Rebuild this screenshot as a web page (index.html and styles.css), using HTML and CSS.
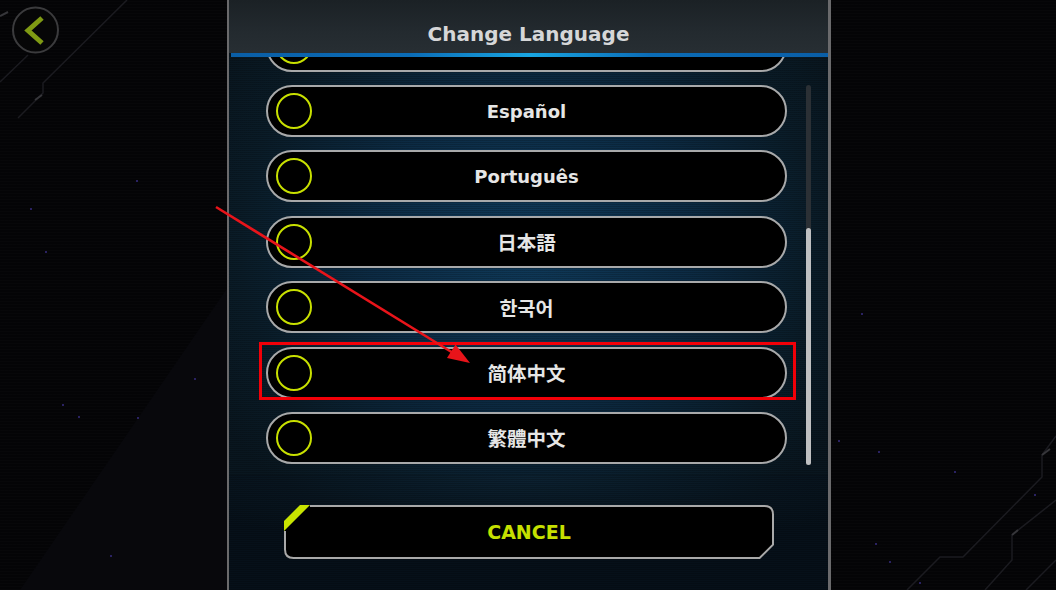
FILE: index.html
```html
<!DOCTYPE html>
<html lang="en">
<head>
<meta charset="utf-8">
<title>Change Language</title>
<link rel="stylesheet" href="styles.css">
</head>
<body>
<div class="screen">
  <svg class="circuit" width="1056" height="590" viewBox="0 0 1056 590" aria-hidden="true">
    <polygon points="250,255 250,590 20,590" fill="#08080c"/>
    <g fill="none" stroke="#1b1b20" stroke-width="1.5">
      <polyline points="0,82 28,55"/>
      <polyline points="127,0 43,83 43,93 18,118"/>
      <polyline points="1056,436 1042,455 1042,477 963,557 940,557 907,590"/>
      <polyline points="1056,500 1012,535 1012,560 985,590"/>
      <polyline points="1056,560 1026,590"/>
    </g>
    <g stroke="#36363a" stroke-width="2">
      <line x1="0" y1="16" x2="8" y2="12"/>
      <line x1="35" y1="100" x2="42" y2="95"/>
      <line x1="1042" y1="455" x2="1050" y2="449"/>
      <line x1="1012" y1="535" x2="1018" y2="530"/>
    </g>
    <g fill="#2a2262">
      <rect x="30" y="208" width="2" height="2"/>
      <rect x="45" y="251" width="2" height="2"/>
      <rect x="136" y="180" width="2" height="2"/>
      <rect x="78" y="416" width="2" height="2"/>
      <rect x="194" y="378" width="2" height="2"/>
      <rect x="110" y="555" width="2" height="2"/>
      <rect x="137" y="417" width="2" height="2"/>
      <rect x="62" y="404" width="2" height="2"/>
      <rect x="861" y="313" width="2" height="2"/>
      <rect x="838" y="440" width="2" height="2"/>
      <rect x="878" y="451" width="2" height="2"/>
      <rect x="954" y="471" width="2" height="2"/>
      <rect x="1034" y="494" width="2" height="2"/>
      <rect x="875" y="543" width="2" height="2"/>
      <rect x="889" y="561" width="2" height="2"/>
      <rect x="919" y="582" width="2" height="2"/>
    </g>
  </svg>

  <button class="back" type="button" aria-label="Back">
    <svg width="50" height="50" viewBox="0 0 50 50" aria-hidden="true">
      <circle cx="24.5" cy="24" r="22.5" fill="#060607" stroke="#3b3b3d" stroke-width="2"/>
      <polyline points="31,12 17,24.5 31,37" fill="none" stroke="#7f9a14" stroke-width="5" stroke-linejoin="miter"/>
    </svg>
  </button>

  <section class="panel">
    <header class="panel-head">
      <h1 class="title">Change Language</h1>
    </header>
    <div class="blue-bar"></div>

    <div class="list">
      <div class="rows">
        <div class="row"><span class="radio"></span></div>
        <div class="row"><span class="radio"></span><span class="label">Español</span></div>
        <div class="row"><span class="radio"></span><span class="label">Português</span></div>
        <div class="row"><span class="radio"></span><span class="label" lang="ja">日本語</span></div>
        <div class="row"><span class="radio"></span><span class="label" lang="ko">한국어</span></div>
        <div class="row"><span class="radio"></span><span class="label" lang="zh-Hans">简体中文</span></div>
        <div class="row"><span class="radio"></span><span class="label" lang="zh-Hant">繁體中文</span></div>
      </div>
      <div class="scroll-track"><div class="scroll-thumb"></div></div>
    </div>

    <footer class="panel-foot">
      <button class="cancel" type="button">
        <svg class="cancel-frame" width="490" height="54" viewBox="0 0 490 54" aria-hidden="true">
          <path d="M26 0 H481 Q490 0 490 9 V40 L476 54 H9 Q0 54 0 45 V26 Z" fill="#000"/>
          <path d="M26 1 H480.5 Q489 1 489 9.5 V39.6 L475.6 53 H9.5 Q1 53 1 44.5 V26" fill="none" stroke="#a9a9a9" stroke-width="2"/>
          <polygon points="16,0 26,0 0,26 0,16" fill="#c8e400"/>
        </svg>
        <span class="cancel-text">CANCEL</span>
      </button>
    </footer>
  </section>

  <div class="highlight"></div>

  <svg class="arrow" width="1056" height="590" viewBox="0 0 1056 590" aria-hidden="true">
    <line x1="216" y1="207" x2="458" y2="356" stroke="#e8141a" stroke-width="2.6"/>
    <polygon points="470,363 447,358 455.5,344.5" fill="#e8141a"/>
  </svg>
</div>
</body>
</html>
```

FILE: styles.css
```css
* { box-sizing: border-box; }

html, body {
  margin: 0;
  padding: 0;
  background: #040406;
}

.screen {
  position: relative;
  width: 1056px;
  height: 590px;
  overflow: hidden;
  display: flex;
  background:
    repeating-linear-gradient(0deg, rgba(255,255,255,0.012) 0 1px, transparent 1px 3px),
    #040406;
  font-family: "DejaVu Sans", "Noto Sans CJK SC", sans-serif;
}

.circuit {
  position: absolute;
  left: 0;
  top: 0;
}

.back {
  position: absolute;
  left: 11px;
  top: 6px;
  width: 50px;
  height: 50px;
  padding: 0;
  border: 0;
  background: none;
}
.back svg { display: block; }

.panel {
  position: relative;
  margin-left: 227px;
  width: 604px;
  height: 590px;
  border-left: 2px solid #6a6a6c;
  border-right: 3px solid #6a6a6c;
  display: flex;
  flex-direction: column;
  background: #07121a;
}

.panel-head {
  height: 53px;
  padding-top: 15px;
  display: flex;
  align-items: center;
  justify-content: center;
  background: linear-gradient(180deg, #1b2125 0%, #232a2f 60%, #272e33 100%);
}

.title {
  margin: 0;
  font-family: "DejaVu Sans", sans-serif;
  font-weight: bold;
  font-size: 20px;
  color: #d6d7d8;
}

.blue-bar {
  height: 4px;
  margin-left: 2px;
  background: linear-gradient(90deg, #0a5ea6 0%, #0b6cb6 30%, #19a6e2 50%, #0b6cb6 70%, #0a5ea6 100%);
}

.list {
  height: 418px;
  display: flex;
  overflow: hidden;
  padding-left: 37px;
  background:
    repeating-linear-gradient(0deg, rgba(0,0,0,0.18) 0 1px, transparent 1px 2px),
    radial-gradient(ellipse 60% 80% at 50% 45%, #0f3a5a 0%, #0c2b44 45%, #0a1c28 80%, #09161f 100%);
}

.rows {
  width: 521px;
  margin-top: -37.4px;
  display: flex;
  flex-direction: column;
  gap: 13.4px;
  flex: none;
}

.row {
  height: 52px;
  flex: none;
  display: grid;
  grid-template-columns: 48px 1fr 48px;
  align-items: center;
  border: 2px solid #a8a9aa;
  border-radius: 26px;
  background: #000;
}

.radio {
  width: 36px;
  height: 36px;
  margin-left: 8px;
  border: 2px solid #c8e000;
  border-radius: 50%;
}

.label {
  text-align: center;
  font-family: "DejaVu Sans", sans-serif;
  font-weight: bold;
  font-size: 18px;
  color: #e6e6e6;
}

.label:lang(ja) { font-family: "Noto Sans CJK JP", sans-serif; font-size: 19.5px; }
.label:lang(ko) { font-family: "Noto Sans CJK KR", sans-serif; font-size: 19.5px; }
.label:lang(zh-Hans) { font-family: "Noto Sans CJK SC", sans-serif; font-size: 19.5px; }
.label:lang(zh-Hant) { font-family: "Noto Sans CJK TC", sans-serif; font-size: 19.5px; }

.scroll-track {
  flex: none;
  width: 5px;
  height: 380px;
  margin-top: 28px;
  margin-left: 19px;
  border-radius: 3px;
  background: #2b3035;
  padding-top: 143px;
}

.scroll-thumb {
  height: 237px;
  border-radius: 3px;
  background: #bfc0c1;
}

.panel-foot {
  flex: 1;
  padding-top: 30px;
  padding-left: 55px;
  background:
    repeating-linear-gradient(0deg, rgba(0,0,0,0.18) 0 1px, transparent 1px 2px),
    radial-gradient(ellipse 70% 60% at 50% 0%, #0c2232 0%, #08151f 60%, #061019 100%);
}

.cancel {
  position: relative;
  width: 490px;
  height: 54px;
  padding: 0;
  border: 0;
  background: none;
  display: flex;
  align-items: center;
  justify-content: center;
}

.cancel-frame {
  position: absolute;
  left: 0;
  top: 0;
}

.cancel-text {
  position: relative;
  font-family: "DejaVu Sans", sans-serif;
  font-weight: bold;
  font-size: 19px;
  color: #c6e000;
}

.highlight {
  position: absolute;
  left: 259px;
  top: 342px;
  width: 537px;
  height: 58px;
  border: 3px solid #f20008;
}

.arrow {
  position: absolute;
  left: 0;
  top: 0;
  pointer-events: none;
}
```
